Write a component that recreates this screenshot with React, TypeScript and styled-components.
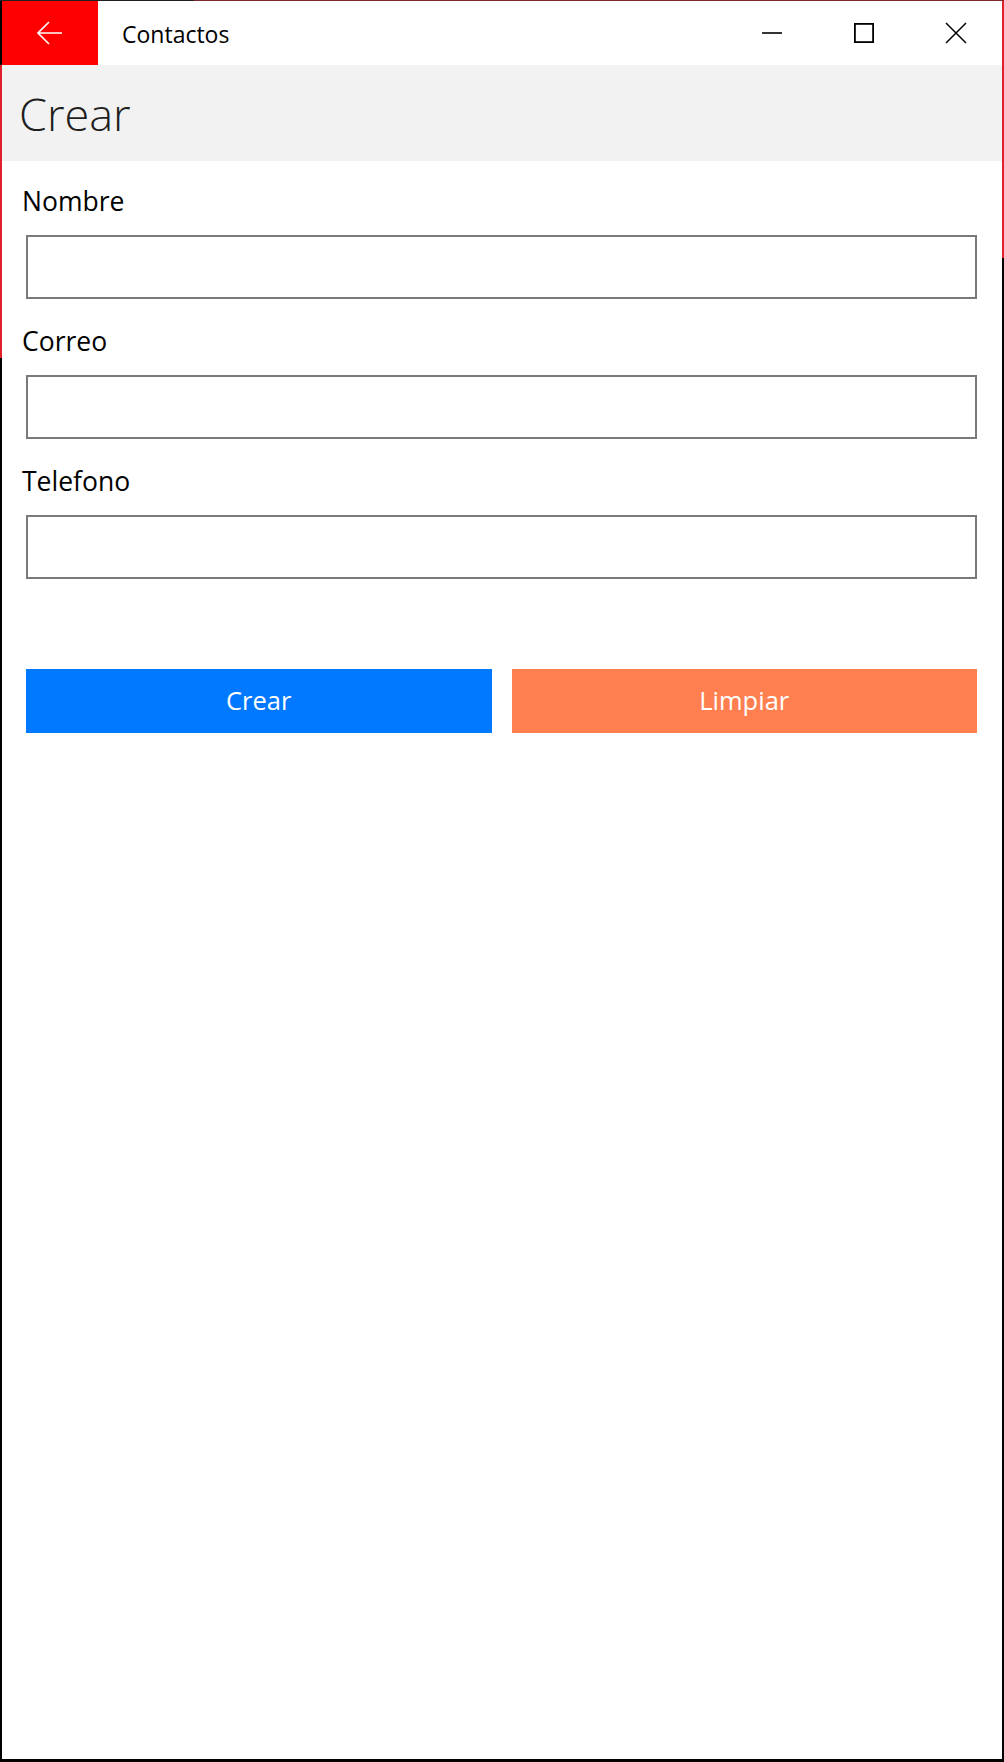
import React from "react";
import styled, { createGlobalStyle } from "styled-components";

const GlobalStyle = createGlobalStyle`
  html, body {
    margin: 0;
    padding: 0;
    background: #ffffff;
  }
  body {
    font-family: "Open Sans", "Noto Sans", "Liberation Sans", sans-serif;
  }
  * { box-sizing: border-box; }
`;

const Frame = styled.div`
  width: 1004px;
  height: 1762px;
  display: flex;
  flex-direction: column;
  padding: 1px 2px 3px 2px;
  background:
    linear-gradient(to right, #1f1f1f 0 194px, #7c2a2e 194px) top / 100% 1px no-repeat,
    linear-gradient(to bottom, #000 0 65px, #e0202c 65px 358px, #000 358px) left / 2px 100% no-repeat,
    linear-gradient(to bottom, #e0202c 0 258px, #000 258px) right / 2px 100% no-repeat,
    #000;
`;

const Window = styled.div`
  flex: 1;
  display: flex;
  flex-direction: column;
  background: #ffffff;
`;

const TitleBar = styled.div`
  height: 64px;
  display: flex;
  align-items: center;
  background: #ffffff;
`;

const BackButton = styled.button`
  width: 96px;
  height: 64px;
  border: none;
  padding: 0;
  margin: 0;
  background: #ff0000;
  display: flex;
  align-items: center;
  justify-content: center;
  cursor: pointer;
`;

const AppTitle = styled.div`
  margin-left: 24px;
  padding-top: 2px;
  flex: 1;
  font-size: 23px;
  line-height: 30px;
  color: #000;
`;

const Controls = styled.div`
  display: flex;
  height: 64px;
`;

const ControlButton = styled.button`
  width: 92px;
  height: 64px;
  border: none;
  padding: 0;
  background: transparent;
  display: flex;
  align-items: center;
  justify-content: center;
`;

const PageHeader = styled.div`
  height: 96px;
  background: #f2f2f2;
  display: flex;
  align-items: center;
  padding: 2px 0 0 17px;
`;

const PageTitle = styled.h1`
  margin: 0;
  font-size: 45px;
  font-weight: 300;
  line-height: 64px;
  color: #1e1e1e;
`;

const Form = styled.div`
  display: flex;
  flex-direction: column;
  gap: 24px;
  padding: 22px 25px 0 20px;
`;

const Field = styled.div`
  display: flex;
  flex-direction: column;
  gap: 16px;
`;

const Label = styled.label`
  font-size: 26.5px;
  line-height: 36px;
  color: #000;
`;

const Input = styled.input`
  height: 64px;
  margin-left: 4px;
  border: 2px solid #7a7a7a;
  background: #fff;
  font-family: inherit;
  font-size: 24px;
  padding: 0 12px;
  outline: none;
`;

const ButtonRow = styled.div`
  display: grid;
  grid-template-columns: 1fr 1fr;
  gap: 20px;
  padding: 90px 25px 0 24px;
`;

const ActionButton = styled.button<{ $bg: string }>`
  height: 64px;
  border: none;
  background: ${(p) => p.$bg};
  color: #ffffff;
  font-family: inherit;
  font-size: 25.5px;
  padding: 0 0 2px 0;
  cursor: pointer;
`;

const fields = ["Nombre", "Correo", "Telefono"];

export default function App() {
  return (
    <>
      <GlobalStyle />
      <Frame>
        <Window>
          <TitleBar>
            <BackButton aria-label="Atrás">
              <svg width="26" height="24" viewBox="0 0 26 24" fill="none">
                <path d="M12 1 L1 12 L12 23 M1 12 H25" stroke="#fff" strokeWidth="1.6" />
              </svg>
            </BackButton>
            <AppTitle>Contactos</AppTitle>
            <Controls>
              <ControlButton aria-label="Minimizar">
                <svg width="22" height="22" viewBox="0 0 22 22" fill="none">
                  <path d="M1 11 H21" stroke="#000" strokeWidth="1.6" />
                </svg>
              </ControlButton>
              <ControlButton aria-label="Maximizar">
                <svg width="22" height="22" viewBox="0 0 22 22" fill="none">
                  <rect x="1.9" y="1.9" width="18.2" height="18.2" stroke="#000" strokeWidth="1.8" />
                </svg>
              </ControlButton>
              <ControlButton aria-label="Cerrar">
                <svg width="22" height="22" viewBox="0 0 22 22" fill="none">
                  <path d="M1 1 L21 21 M21 1 L1 21" stroke="#000" strokeWidth="1.5" />
                </svg>
              </ControlButton>
            </Controls>
          </TitleBar>
          <PageHeader>
            <PageTitle>Crear</PageTitle>
          </PageHeader>
          <Form>
            {fields.map((f) => (
              <Field key={f}>
                <Label>{f}</Label>
                <Input />
              </Field>
            ))}
          </Form>
          <ButtonRow>
            <ActionButton $bg="#0078ff">Crear</ActionButton>
            <ActionButton $bg="#ff7f50">Limpiar</ActionButton>
          </ButtonRow>
        </Window>
      </Frame>
    </>
  );
}
